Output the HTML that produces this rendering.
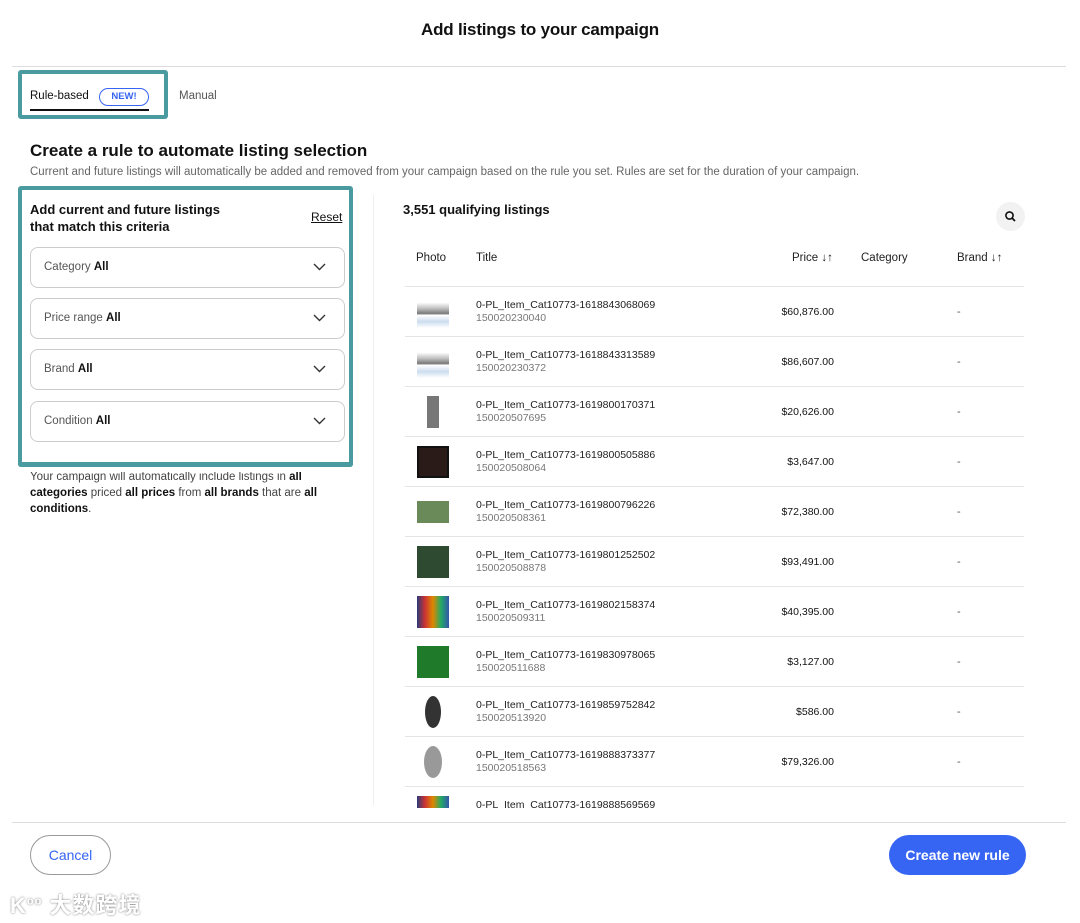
<!DOCTYPE html>
<html><head><meta charset="utf-8"><style>
*{box-sizing:border-box;margin:0;padding:0}
body{width:1080px;height:923px;background:#fff;font-family:"Liberation Sans",Arial,sans-serif;color:#111;position:relative;overflow:hidden}
.a{position:absolute}
.title{left:0;width:1080px;top:20px;text-align:center;font-size:17px;font-weight:bold;letter-spacing:-0.2px}
.hr{height:1px;background:#ddd}
.teal{border:4px solid #4a9ba0;border-radius:3px}
.dd{left:30px;width:315px;height:41px;border:1px solid #ccc;border-radius:8px;font-size:11.5px;color:#555;padding:13px 0 0 13px}
.dd b{color:#111}
.dd svg{position:absolute;right:18px;top:15px}
.th{font-size:11.5px;color:#222;top:252px}
.row{left:405px;width:619px;height:50px;border-top:1px solid #e5e5e5}
.row .img{position:absolute;left:12px;top:9px;width:32px;height:32px}
.row .t{position:absolute;left:71px;top:12px;font-size:10.5px;color:#222}
.row .t span{display:block;color:#777;margin-top:1px}
.row .p{position:absolute;right:190px;top:19px;font-size:10.5px}
.row .d{position:absolute;left:552px;top:19px;font-size:11px;color:#555}
</style></head><body>
<div class="a title">Add listings to your campaign</div>
<div class="a hr" style="left:12px;width:1054px;top:66px"></div>
<div class="a teal" style="left:18px;top:70px;width:150px;height:49px"></div>
<div class="a" style="left:30px;top:90px;font-size:11.5px">Rule-based</div>
<div class="a" style="left:99px;top:88px;width:50px;height:18px;border:1px solid #3665f3;border-radius:9px;font-size:9.5px;font-weight:bold;color:#3665f3;text-align:center;line-height:16px">NEW!</div>
<div class="a" style="left:30px;top:109px;width:119px;height:2px;background:#111"></div>
<div class="a" style="left:179px;top:90px;font-size:11.5px;color:#555">Manual</div>
<div class="a" style="left:30px;top:141px;font-size:17px;font-weight:bold">Create a rule to automate listing selection</div>
<div class="a" style="left:30px;top:166px;font-size:11.5px;color:#666">Current and future listings will automatically be added and removed from your campaign based on the rule you set. Rules are set for the duration of your campaign.</div>
<div class="a" style="left:30px;top:469px;width:320px;font-size:11.5px;color:#444;line-height:16px">Your campaign will automatically include listings in <b style="color:#111">all categories</b> priced <b style="color:#111">all prices</b> from <b style="color:#111">all brands</b> that are <b style="color:#111">all conditions</b>.</div>
<div class="a teal" style="left:18px;top:186px;width:335px;height:281px;background:transparent"></div>
<div class="a" style="left:22px;top:464px;width:327px;height:8px;background:#fff"></div>
<div class="a" style="left:18px;top:462px;width:335px;height:5px;background:#4a9ba0;border-radius:0 0 3px 3px"></div>
<div class="a" style="left:30px;top:201px;font-size:13px;font-weight:bold;line-height:17px">Add current and future listings<br>that match this criteria</div>
<div class="a" style="left:311px;top:210px;font-size:12px;text-decoration:underline">Reset</div>
<div class="a dd" style="top:247px">Category <b>All</b><svg width="13" height="8"><path d="M1 1l5.5 5.5L12 1" fill="none" stroke="#333" stroke-width="1.4"/></svg></div>
<div class="a dd" style="top:298px">Price range <b>All</b><svg width="13" height="8"><path d="M1 1l5.5 5.5L12 1" fill="none" stroke="#333" stroke-width="1.4"/></svg></div>
<div class="a dd" style="top:349px">Brand <b>All</b><svg width="13" height="8"><path d="M1 1l5.5 5.5L12 1" fill="none" stroke="#333" stroke-width="1.4"/></svg></div>
<div class="a dd" style="top:401px">Condition <b>All</b><svg width="13" height="8"><path d="M1 1l5.5 5.5L12 1" fill="none" stroke="#333" stroke-width="1.4"/></svg></div>
<div class="a" style="left:373px;top:195px;width:1px;height:610px;background:#eee"></div>
<div class="a" style="left:403px;top:202px;font-size:13px;font-weight:bold">3,551 qualifying listings</div>
<div class="a" style="left:996px;top:202px;width:29px;height:29px;border-radius:50%;background:#f2f2f2"><svg width="29" height="29"><circle cx="13.5" cy="13.5" r="3.6" fill="none" stroke="#111" stroke-width="1.6"/><path d="M16 16l3 3" stroke="#111" stroke-width="1.8"/></svg></div>
<div class="a th" style="left:416px">Photo</div>
<div class="a th" style="left:476px">Title</div>
<div class="a th" style="left:792px">Price ↓↑</div>
<div class="a th" style="left:861px">Category</div>
<div class="a th" style="left:957px">Brand ↓↑</div>
<div class="a row" style="top:286px"><div class="img" style="background:linear-gradient(#fff 20%,#bbb 40%,#777 55%,#fff 60%,#cde 80%,#fff)"></div><div class="t">0-PL_Item_Cat10773-1618843068069<span>150020230040</span></div><div class="p">$60,876.00</div><div class="d">-</div></div>
<div class="a row" style="top:336px"><div class="img" style="background:linear-gradient(#fff 20%,#bbb 40%,#777 55%,#fff 60%,#cde 80%,#fff)"></div><div class="t">0-PL_Item_Cat10773-1618843313589<span>150020230372</span></div><div class="p">$86,607.00</div><div class="d">-</div></div>
<div class="a row" style="top:386px"><div class="img" style="left:22px;width:12px;background:#777"></div><div class="t">0-PL_Item_Cat10773-1619800170371<span>150020507695</span></div><div class="p">$20,626.00</div><div class="d">-</div></div>
<div class="a row" style="top:436px"><div class="img" style="background:#2a1a18;border:2px solid #111"></div><div class="t">0-PL_Item_Cat10773-1619800505886<span>150020508064</span></div><div class="p">$3,647.00</div><div class="d">-</div></div>
<div class="a row" style="top:486px"><div class="img" style="top:14px;height:22px;background:#6a8a5a"></div><div class="t">0-PL_Item_Cat10773-1619800796226<span>150020508361</span></div><div class="p">$72,380.00</div><div class="d">-</div></div>
<div class="a row" style="top:536px"><div class="img" style="background:#2e4a30"></div><div class="t">0-PL_Item_Cat10773-1619801252502<span>150020508878</span></div><div class="p">$93,491.00</div><div class="d">-</div></div>
<div class="a row" style="top:586px"><div class="img" style="background:linear-gradient(90deg,#2a3a7a,#c33,#d80,#2a6,#35a)"></div><div class="t">0-PL_Item_Cat10773-1619802158374<span>150020509311</span></div><div class="p">$40,395.00</div><div class="d">-</div></div>
<div class="a row" style="top:636px"><div class="img" style="background:#1f7a2a"></div><div class="t">0-PL_Item_Cat10773-1619830978065<span>150020511688</span></div><div class="p">$3,127.00</div><div class="d">-</div></div>
<div class="a row" style="top:686px"><div class="img" style="left:20px;width:16px;border-radius:50%;background:#333"></div><div class="t">0-PL_Item_Cat10773-1619859752842<span>150020513920</span></div><div class="p">$586.00</div><div class="d">-</div></div>
<div class="a row" style="top:736px"><div class="img" style="left:19px;width:18px;border-radius:50%;background:#999"></div><div class="t">0-PL_Item_Cat10773-1619888373377<span>150020518563</span></div><div class="p">$79,326.00</div><div class="d">-</div></div>
<div class="a row" style="top:786px;height:22px;overflow:hidden"><div class="img" style="background:linear-gradient(90deg,#2a3a7a,#c33,#d80,#2a6,#35a)"></div><div class="t">0-PL_Item_Cat10773-1619888569569</div></div>
<div class="a hr" style="left:12px;width:1054px;top:822px"></div>
<div class="a" style="left:30px;top:835px;width:81px;height:40px;border:1px solid #999;border-radius:20px;text-align:center;line-height:38px;font-size:14px;color:#3665f3">Cancel</div>
<div class="a" style="left:889px;top:835px;width:137px;height:40px;background:#3665f3;border-radius:20px;text-align:center;line-height:40px;font-size:14px;font-weight:bold;color:#fff">Create new rule</div>
<div class="a" style="left:10px;top:888px;font-size:22px;color:#fff;font-weight:bold;text-shadow:0 0 2px #777;font-family:'Liberation Sans','Noto Sans CJK SC',sans-serif;letter-spacing:1px">K<sup style="font-size:11px">oo</sup> 大数跨境</div>
</body></html>
